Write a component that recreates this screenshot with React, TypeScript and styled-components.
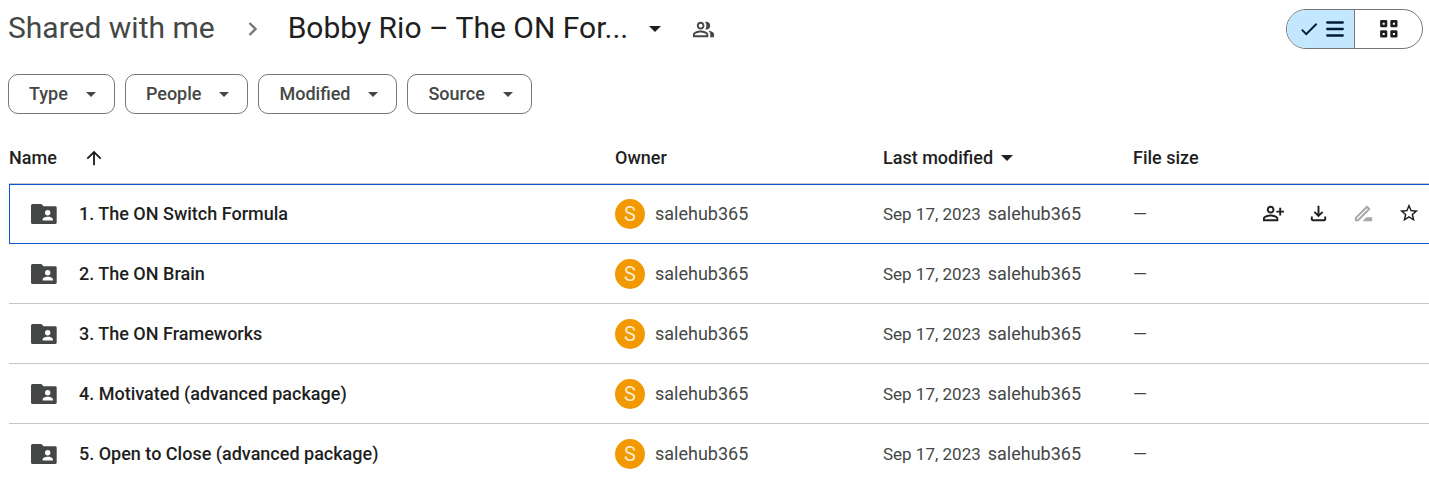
import React from "react";
import styled, { createGlobalStyle, css } from "styled-components";

const GlobalStyle = createGlobalStyle`
  * { box-sizing: border-box; }
  body {
    margin: 0;
    background: #fff;
    color: #1f1f1f;
    font-family: Roboto, "Liberation Sans", sans-serif;
    font-size: 18px;
    line-height: 24px;
    overflow-x: hidden;
  }
  button { font: inherit; color: inherit; background: none; border: 0; padding: 0; cursor: pointer; }
  svg { display: block; flex: none; fill: currentColor; }
`;

const Page = styled.main`
  padding-left: 8px;
`;

const Header = styled.header`
  display: flex;
  align-items: center;
  justify-content: space-between;
  height: 58px;
  padding-right: 6px;
`;

const Breadcrumbs = styled.nav`
  display: flex;
  align-items: center;
  font-size: 30px;
  line-height: 40px;
  white-space: nowrap;
`;

const CrumbLink = styled.a`
  padding-bottom: 2px;
  color: #444746;
  text-decoration: none;
`;

const CrumbDivider = styled.span`
  display: flex;
  padding: 0 30px 0 33px;
  color: #747775;
`;

const CrumbButton = styled.button`
  display: flex;
  align-items: center;
  gap: 21px;
`;

const CrumbTitle = styled.span`
  padding-bottom: 2px;
`;

const PeopleButton = styled.button`
  margin-left: 31px;
  color: #444746;
`;

const ViewToggle = styled.div`
  display: flex;
  height: 40px;
  border: 1px solid #747775;
  border-radius: 20px;
  overflow: hidden;
`;

const ViewButton = styled.button<{ $active?: boolean }>`
  display: flex;
  align-items: center;
  justify-content: center;
  gap: 6px;
  width: 67px;
  ${(p) =>
    p.$active &&
    css`
      width: 68px;
      background: #c2e7ff;
      color: #001d35;
      border-right: 1px solid #747775;
    `}
`;

const Filters = styled.div`
  display: flex;
  gap: 10px;
  padding: 16px 0 18px;
`;

const Chip = styled.button`
  display: flex;
  align-items: center;
  gap: 18px;
  height: 40px;
  padding: 0 18px 0 20px;
  border: 1px solid #747775;
  border-radius: 10px;
  color: #444746;
  font-weight: 500;
`;

const FileList = styled.section`
  padding-left: 1px;
`;

const FileTable = styled.table`
  width: 100%;
  table-layout: fixed;
  border-collapse: separate;
  border-spacing: 0;
`;

const HeadCell = styled.th<{ $width?: number }>`
  width: ${(p) => (p.$width ? `${p.$width}px` : "auto")};
  height: 52px;
  padding: 0;
  border-bottom: 1px solid #c7c7c7;
  font-weight: 500;
  text-align: left;
  white-space: nowrap;
`;

const SortButton = styled.button<{ $gap: number }>`
  display: flex;
  align-items: center;
  gap: ${(p) => p.$gap}px;
`;

const Cell = styled.td`
  height: 60px;
  padding: 0;
  border-bottom: 1px solid #c7c7c7;
  color: #444746;
  white-space: nowrap;
`;

const Row = styled.tr<{ $selected?: boolean }>`
  ${(p) =>
    p.$selected &&
    css`
      ${Cell} {
        border-top: 1px solid #0b57d0;
        border-bottom-color: #0b57d0;
      }
      ${Cell}:first-child {
        border-left: 1px solid #0b57d0;
      }
    `}
  &:last-child ${Cell} {
    border-bottom-color: transparent;
  }
`;

const FileName = styled.div<{ $selected?: boolean }>`
  display: flex;
  align-items: center;
  gap: 22px;
  padding-left: ${(p) => (p.$selected ? 21 : 22)}px;
  color: #1f1f1f;
  font-weight: 500;
  svg { color: #444746; }
`;

const Owner = styled.div`
  display: flex;
  align-items: center;
  gap: 10px;
`;

const Avatar = styled.span`
  width: 30px;
  height: 30px;
  border-radius: 50%;
  background: #f29900;
  color: #fdeacb;
  font-size: 20px;
  line-height: 30px;
  text-align: center;
`;

const Modified = styled.div`
  display: flex;
  align-items: baseline;
  gap: 7px;
`;

const ModifiedDate = styled.time`
  font-size: 17px;
`;

const Actions = styled.div`
  display: flex;
  justify-content: flex-end;
  gap: 22px;
  padding: 0 9px 2px 0;
  color: #1f1f1f;
`;

const ActionButton = styled.button`
  display: flex;
  align-items: center;
  justify-content: center;
  width: 23px;
  height: 24px;
  &:disabled { color: #a8a8a8; }
`;

const Caret = ({ size }: { size: number }) => (
  <svg width={size} height={size / 2} viewBox="0 0 10 5" aria-hidden="true">
    <path d="M0 0h10L5 5z" />
  </svg>
);

const Icon = ({ d, size = 23 }: { d: string; size?: number }) => (
  <svg width={size} height={size} viewBox="0 0 24 24" aria-hidden="true">
    <path d={d} />
  </svg>
);

const SharedFolder = () => (
  <svg width="26" height="20" viewBox="0 0 26 20" aria-hidden="true">
    <path
      fillRule="evenodd"
      d="M1.500 0H10.300L12.600 2.300H24.300Q25.700 2.300 25.700 3.700V18.400Q25.700 20 24.100 20H1.600Q0 20 0 18.400V1.500Q0 0 1.500 0zM16.700 6a2.700 2.700 0 1 0 0 5.400a2.700 2.700 0 0 0 0-5.400zM11.600 16.400H21.900V15.300C21.900 13.700 18.900 12.800 16.700 12.800S11.600 13.700 11.600 15.300z"
    />
  </svg>
);

const paths = {
  people:
    "M16.670 13.130C18.040 14.060 19 15.320 19 17v3h4v-3c0-2.180-3.570-3.470-6.330-3.870zM15 12c2.210 0 4-1.790 4-4s-1.790-4-4-4c-.47 0-.91.1-1.330.24C14.500 5.270 15 6.580 15 8s-.5 2.730-1.330 3.760c.42.14.86.24 1.330.24zM9 12c2.210 0 4-1.790 4-4s-1.790-4-4-4-4 1.790-4 4 1.790 4 4 4zm0-6c1.100 0 2 .9 2 2s-.9 2-2 2-2-.9-2-2 .9-2 2-2zM9 13c-2.670 0-8 1.340-8 4v3h16v-3c0-2.660-5.330-4-8-4zm6 5H3v-.99C3.200 16.290 6.300 15 9 15s5.800 1.290 6 2z",
  check: "M9 16.170 4.830 12l-1.420 1.410L9 19 21 7l-1.410-1.410z",
  arrowUp: "M4 12l1.410 1.410L11 7.830V20h2V7.830l5.580 5.590L20 12l-8-8z",
  addPerson:
    "M9 12c2.210 0 4-1.790 4-4s-1.790-4-4-4-4 1.790-4 4 1.790 4 4 4zm0-6c1.100 0 2 .9 2 2s-.9 2-2 2-2-.9-2-2 .9-2 2-2zM9 13c-2.670 0-8 1.340-8 4v3h16v-3c0-2.660-5.330-4-8-4zm6 5H3v-.99C3.200 16.290 6.300 15 9 15s5.800 1.290 6 2zM20 14v-3h3V9h-3V6h-2v3h-3v2h3v3z",
  download:
    "M12 16l-5-5 1.400-1.450 2.600 2.600V4h2v8.150l2.600-2.600L17 11zM6 20q-.82 0-1.410-.59T4 18v-3h2v3h12v-3h2v3q0 .82-.59 1.410T18 20z",
  rename:
    "M15 16l-4 4h10v-4zM18.710 8.040a1 1 0 0 0 0-1.410l-2.340-2.340a1 1 0 0 0-1.410 0L3 16.250V20h3.750zM5.920 18H5v-.92l10.600-10.600.92.92z",
  star: "M22 9.240l-7.190-.62L12 2 9.190 8.630 2 9.240l5.460 4.730L5.820 21 12 17.270 18.180 21l-1.630-7.030zM12 15.400l-3.760 2.270 1-4.280-3.320-2.880 4.380-.38L12 6.100l1.710 4.040 4.380.38-3.320 2.880 1 4.280z",
};

const ListIcon = () => (
  <svg width="18" height="16" viewBox="0 0 18 16" aria-hidden="true">
    <path d="M1.200 1.500H16.800M1.200 8H16.800M1.200 14.500H16.800" stroke="currentColor" strokeWidth="2.300" strokeLinecap="round" />
  </svg>
);

const GridIcon = () => (
  <svg width="18" height="18" viewBox="0 0 18 18" aria-hidden="true">
    <path
      d="M1.400 1.400h4.600v4.600h-4.600zM11.600 1.400h4.600v4.600h-4.600zM1.400 11.600h4.600v4.600h-4.600zM11.600 11.600h4.600v4.600h-4.600z"
      fill="none"
      stroke="currentColor"
      strokeWidth="2.600"
      strokeLinejoin="round"
    />
  </svg>
);

const filters = ["Type", "People", "Modified", "Source"];

const files = [
  "1. The ON Switch Formula",
  "2. The ON Brain",
  "3. The ON Frameworks",
  "4. Motivated (advanced package)",
  "5. Open to Close (advanced package)",
];

export default function App() {
  return (
    <Page>
      <GlobalStyle />
      <Header>
        <Breadcrumbs aria-label="Breadcrumb">
          <CrumbLink href="#shared">Shared with me</CrumbLink>
          <CrumbDivider>
            <svg width="10" height="14" viewBox="0 0 10 14" aria-hidden="true">
              <path d="M1.500 1L7.500 7L1.500 13" fill="none" stroke="currentColor" strokeWidth="2.400" />
            </svg>
          </CrumbDivider>
          <CrumbButton>
            <CrumbTitle>Bobby Rio – The ON For...</CrumbTitle>
            <Caret size={12} />
          </CrumbButton>
          <PeopleButton aria-label="Manage access">
            <Icon d={paths.people} />
          </PeopleButton>
        </Breadcrumbs>
        <ViewToggle role="group" aria-label="View">
          <ViewButton $active aria-label="List view" aria-pressed="true">
            <Icon d={paths.check} size={22} />
            <ListIcon />
          </ViewButton>
          <ViewButton aria-label="Grid view" aria-pressed="false">
            <GridIcon />
          </ViewButton>
        </ViewToggle>
      </Header>
      <Filters>
        {filters.map((label) => (
          <Chip key={label}>
            {label}
            <Caret size={10} />
          </Chip>
        ))}
      </Filters>
      <FileList>
        <FileTable>
          <thead>
            <tr>
              <HeadCell scope="col">
                <SortButton $gap={26}>
                  Name
                  <Icon d={paths.arrowUp} size={22} />
                </SortButton>
              </HeadCell>
              <HeadCell scope="col" $width={268}>Owner</HeadCell>
              <HeadCell scope="col" $width={250}>
                <SortButton $gap={8}>
                  Last modified
                  <Caret size={12} />
                </SortButton>
              </HeadCell>
              <HeadCell scope="col" $width={118}>File size</HeadCell>
              <HeadCell $width={178} aria-label="Actions" />
            </tr>
          </thead>
          <tbody>
            {files.map((name, i) => (
              <Row key={name} $selected={i === 0}>
                <Cell>
                  <FileName $selected={i === 0}>
                    <SharedFolder />
                    {name}
                  </FileName>
                </Cell>
                <Cell>
                  <Owner>
                    <Avatar aria-hidden="true">S</Avatar>
                    salehub365
                  </Owner>
                </Cell>
                <Cell>
                  <Modified>
                    <ModifiedDate dateTime="2023-09-17">Sep 17, 2023</ModifiedDate>
                    <span>salehub365</span>
                  </Modified>
                </Cell>
                <Cell>—</Cell>
                <Cell>
                  {i === 0 && (
                    <Actions>
                      <ActionButton aria-label="Share"><Icon d={paths.addPerson} /></ActionButton>
                      <ActionButton aria-label="Download"><Icon d={paths.download} /></ActionButton>
                      <ActionButton aria-label="Rename" disabled><Icon d={paths.rename} /></ActionButton>
                      <ActionButton aria-label="Add to starred"><Icon d={paths.star} size={22} /></ActionButton>
                    </Actions>
                  )}
                </Cell>
              </Row>
            ))}
          </tbody>
        </FileTable>
      </FileList>
    </Page>
  );
}
